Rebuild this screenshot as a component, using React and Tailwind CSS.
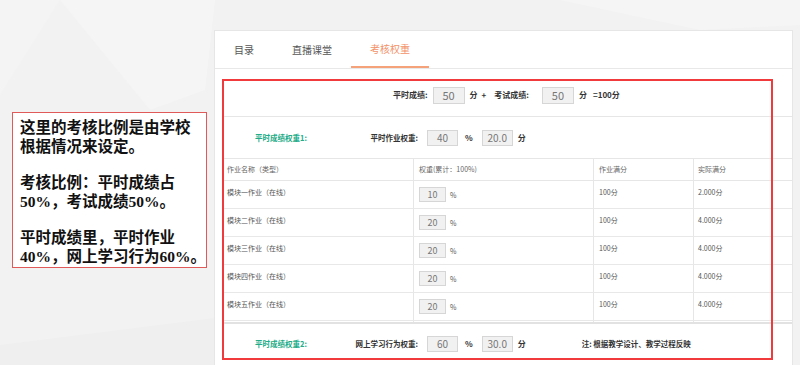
import React from 'react';

const rows = [
  { name: '模块一作业（在线）', weight: '10', full: '100分', real: '2.000分' },
  { name: '模块二作业（在线）', weight: '20', full: '100分', real: '4.000分' },
  { name: '模块三作业（在线）', weight: '20', full: '100分', real: '4.000分' },
  { name: '模块四作业（在线）', weight: '20', full: '100分', real: '4.000分' },
  { name: '模块五作业（在线）', weight: '20', full: '100分', real: '4.000分' },
];

const cols = 'grid grid-cols-[191px_180px_100px_99px]';
const cell = 'border-r border-[#e6e6e6]';

function Backdrop() {
  return (
    <svg className="absolute inset-0" width="800" height="365" viewBox="0 0 800 365">
      <polygon points="0,0 60,0 0,95" fill="#f4f4f4" />
      <polygon points="60,0 215,0 205,90 150,110" fill="#f5f5f5" />
      <polygon points="560,0 800,0 800,25 700,30" fill="#f5f5f5" />
      <polygon points="0,345 215,318 215,365 0,365" fill="#efefef" />
    </svg>
  );
}

function Box({ value, w = 'w-[31px]', h = 'h-[16px]', size = 'text-[10px]' }) {
  return (
    <div className={`${w} ${h} ${size} shrink-0 bg-[#f1f1f1] border border-[#d6d6d6] text-[#777] font-normal flex items-center justify-center leading-none`}>
      {value}
    </div>
  );
}

function WeightRow({ tag, label, pct, score, note }) {
  return (
    <div className="flex items-center text-[7.5px] font-bold text-[#333]">
      <div className="w-[195px] pl-[32px] flex justify-between">
        <span className="text-[#22ab87]">{tag}</span>
        <span>{label}</span>
      </div>
      <div className="ml-[9px]"><Box value={pct} /></div>
      <span className="ml-[7px] text-[8px]">%</span>
      <div className="ml-[9px]"><Box value={score} /></div>
      <span className="ml-[5px] text-[8px]">分</span>
      {note && <span className="ml-[56px]">{note}</span>}
    </div>
  );
}

export default function App() {
  return (
    <div className="relative w-[800px] h-[365px] overflow-hidden bg-[#f2f2f2] flex font-['Noto_Sans_CJK_SC','Liberation_Sans',sans-serif]">
      <Backdrop />

      <aside className="relative w-[214px] shrink-0 pt-[112px] pl-[12px]">
        <div className="w-[195px] border border-[#e05a5a] bg-white pl-[7px] pt-[5px] pb-[1px] text-[15.5px] leading-[19px] font-semibold text-[#111] font-['Liberation_Serif','Noto_Sans_CJK_SC',serif]">
          <p>这里的考核比例是由学校<br />根据情况来设定。</p>
          <p className="mt-[17px]">考核比例：平时成绩占<br />50%，考试成绩50%。</p>
          <p className="mt-[17px]">平时成绩里，平时作业<br />40%，网上学习行为60%。</p>
        </div>
      </aside>

      <main className="relative mt-[30px] w-[579px] h-[340px] bg-white border border-[#e6e6e6]">
        <nav className="h-[38px] flex border-b border-[#e8e8e8] text-[10px] text-[#555]">
          <div className="px-[19px] flex items-center">目录</div>
          <div className="px-[19px] flex items-center">直播课堂</div>
          <div className="px-[19px] flex items-center text-[#f3936a] border-b-2 border-[#f5a27a]">考核权重</div>
        </nav>

        <div className="ml-[8px]">
          <div className="h-[48px] pt-[5px] border-b border-[#e6e6e6] pl-[170px] flex items-center text-[8px] font-bold text-[#333]">
            <span>平时成绩:</span>
            <div className="ml-[5px]"><Box value="50" w="w-[32px]" h="h-[17px]" size="text-[11px]" /></div>
            <span className="ml-[5px]">分</span>
            <span className="ml-[4px]">+</span>
            <span className="ml-[8px]">考试成绩:</span>
            <div className="ml-[13px]"><Box value="50" w="w-[32px]" h="h-[17px]" size="text-[11px]" /></div>
            <span className="ml-[5px]">分</span>
            <span className="ml-[6px]">=100分</span>
          </div>

          <div className="h-[41px] flex items-center">
            <WeightRow tag="平时成绩权重1:" label="平时作业权重:" pct="40" score="20.0" />
          </div>

          <div className={`${cols} h-[23px] border-y border-[#e6e6e6] text-[7px] text-[#666]`}>
            <div className={`${cell} pl-[4px] flex items-center`}>作业名称（类型）</div>
            <div className={`${cell} pl-[5px] flex items-center`}>权重(累计：100%)</div>
            <div className={`${cell} pl-[5px] flex items-center`}>作业满分</div>
            <div className={`${cell} pl-[4px] flex items-center`}>实际满分</div>
          </div>

          <div className="h-[141px] overflow-hidden">
            {rows.map((r) => (
              <div key={r.name} className={`${cols} h-[28px] border-b border-[#e8e8e8] text-[7px] text-[#555] leading-[10px]`}>
                <div className={`${cell} pl-[4px] pt-[6px]`}>{r.name}</div>
                <div className={`${cell} pl-[5px] pt-[6px] flex items-start`}>
                  <Box value={r.weight} w="w-[27px]" h="h-[15px]" size="text-[9px]" />
                  <span className="ml-[4px] mt-[3px]">%</span>
                </div>
                <div className={`${cell} pl-[5px] pt-[6px]`}>{r.full}</div>
                <div className={`${cell} pl-[4px] pt-[6px]`}>{r.real}</div>
              </div>
            ))}
            <div className={`${cols} h-[28px]`}>
              <div className={cell} />
              <div className={cell} />
              <div className={cell} />
              <div className={cell} />
            </div>
          </div>

          <div className="h-[42px] border-t-2 border-[#e2e2e2] flex items-center">
            <WeightRow tag="平时成绩权重2:" label="网上学习行为权重:" pct="60" score="30.0" note="注: 根据教学设计、教学过程反映" />
          </div>
        </div>

        <div className="absolute left-[7px] top-[48px] w-[551px] h-[281px] border-2 border-[#f03a3c] pointer-events-none" />
      </main>
    </div>
  );
}
